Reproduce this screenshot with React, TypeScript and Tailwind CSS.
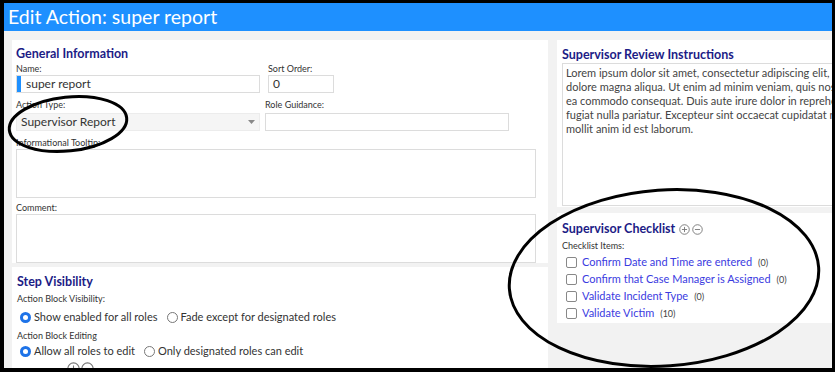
const LOREM = [
  "Lorem ipsum dolor sit amet, consectetur adipiscing elit, sed do eiusmod tempor incididunt ut labore et",
  "dolore magna aliqua. Ut enim ad minim veniam, quis nostrud exercitation ullamco laboris nisi ut aliquip ex",
  "ea commodo consequat. Duis aute irure dolor in reprehenderit in voluptate velit esse cillum dolore eu",
  "fugiat nulla pariatur. Excepteur sint occaecat cupidatat non proident, sunt in culpa qui officia deserunt",
  "mollit anim id est laborum.",
];

const CHECKLIST = [
  { label: "Confirm Date and Time are entered", count: 0 },
  { label: "Confirm that Case Manager is Assigned", count: 0 },
  { label: "Validate Incident Type", count: 0 },
  { label: "Validate Victim", count: 10 },
];

function Label({ children, className = "" }: { children: React.ReactNode; className?: string }) {
  return <div className={`text-[9px] leading-[11px] text-[#333] ${className}`}>{children}</div>;
}

function Heading({ children, className = "" }: { children: React.ReactNode; className?: string }) {
  return <div className={`text-[12.5px] leading-[16px] font-bold text-[#1c1c86] ${className}`}>{children}</div>;
}

function Radio({ checked }: { checked?: boolean }) {
  return checked ? (
    <span className="w-[11px] h-[11px] rounded-full bg-[#1e73e8] flex items-center justify-center shrink-0">
      <span className="w-[5px] h-[5px] rounded-full bg-white" />
    </span>
  ) : (
    <span className="w-[11px] h-[11px] rounded-full border border-[#777] bg-white shrink-0" />
  );
}

function RoundIcon({ minus, size = 11 }: { minus?: boolean; size?: number }) {
  return (
    <svg width={size} height={size} viewBox="0 0 12 12" className="shrink-0">
      <circle cx="6" cy="6" r="5.2" fill="none" stroke="#777" strokeWidth="1" />
      <line x1="3.2" y1="6" x2="8.8" y2="6" stroke="#777" strokeWidth="1" />
      {!minus && <line x1="6" y1="3.2" x2="6" y2="8.8" stroke="#777" strokeWidth="1" />}
    </svg>
  );
}

export default function App() {
  return (
    <div className="relative w-[835px] h-[372px] bg-black pt-[3px] pl-[4px] pr-[3px] pb-[4px] font-['Lato',sans-serif] overflow-hidden">
      <div className="w-full h-full flex flex-col overflow-hidden">
        <div className="h-[28px] bg-[#1e90ff] text-white text-[19.5px] leading-[28px] pl-[4px] shrink-0">
          Edit Action: super report
        </div>

        <div className="flex-1 bg-[#f2f2f2] flex gap-[9px] pl-[8px] pt-[9px] overflow-hidden">
          {/* left column */}
          <div className="w-[536px] shrink-0 flex flex-col gap-[4px]">
            <div className="bg-white h-[227px] pl-[4px] pt-[6px]">
              <Heading>General Information</Heading>
              <div className="flex gap-[8px] mt-[1px]">
                <div className="w-[244px]">
                  <Label>Name:</Label>
                  <div className="mt-[1px] h-[18px] border border-[#dcdcdc] flex items-center">
                    <span className="w-[4px] h-full bg-[#1e90ff]" />
                    <span className="pl-[5px] text-[12px] text-[#333]">super report</span>
                  </div>
                </div>
                <div className="w-[66px]">
                  <Label>Sort Order:</Label>
                  <div className="mt-[1px] h-[18px] border border-[#dcdcdc] pl-[4px] text-[12px] leading-[16px] text-[#333]">0</div>
                </div>
              </div>
              <div className="flex gap-[5px] mt-[6px]">
                <div className="w-[244px]">
                  <Label>Action Type:</Label>
                  <div className="mt-[3px] h-[18px] bg-[#f5f5f5] border border-[#ececec] flex items-center justify-between pl-[4px] pr-[4px]">
                    <span className="text-[12px] text-[#333]">Supervisor Report</span>
                    <svg width="7" height="4" viewBox="0 0 7 4"><path d="M0 0h7L3.5 4z" fill="#888" /></svg>
                  </div>
                </div>
                <div className="w-[244px]">
                  <Label>Role Guidance:</Label>
                  <div className="mt-[3px] h-[18px] border border-[#dcdcdc]" />
                </div>
              </div>
              <Label className="mt-[6px]">Informational Tooltip:</Label>
              <div className="mt-[1px] w-[520px] h-[49px] border border-[#dcdcdc]" />
              <Label className="mt-[4px]">Comment:</Label>
              <div className="mt-[1px] w-[520px] h-[49px] border border-[#dcdcdc]" />
            </div>

            <div className="bg-white flex-1 pl-[5px] pt-[7px]">
              <Heading>Step Visibility</Heading>
              <Label className="mt-[3px]">Action Block Visibility:</Label>
              <div className="flex items-center gap-[3px] pl-[3px] mt-[5px] text-[11px] leading-[16px] text-[#333]">
                <Radio checked />
                <span>Show enabled for all roles</span>
                <span className="w-[3px]" />
                <Radio />
                <span>Fade except for designated roles</span>
              </div>
              <Label className="mt-[5px]">Action Block Editing</Label>
              <div className="flex items-center gap-[3px] pl-[3px] mt-[2px] text-[11px] leading-[16px] text-[#333]">
                <Radio checked />
                <span>Allow all roles to edit</span>
                <span className="w-[3px]" />
                <Radio />
                <span>Only designated roles can edit</span>
              </div>
              <div className="flex gap-[1px] pl-[50px] mt-[3px]">
                <RoundIcon size={13} />
                <RoundIcon minus size={13} />
              </div>
            </div>
          </div>

          {/* right column */}
          <div className="flex-1 flex flex-col gap-[6px] min-w-0">
            <div className="bg-white h-[167px] pl-[5px] pt-[7px] overflow-hidden">
              <Heading>Supervisor Review Instructions</Heading>
              <div className="w-[400px] h-[143px] border border-[#dcdcdc] pl-[3px] pt-[2px] text-[11px] leading-[14px] text-[#444]">
                {LOREM.map((l) => (
                  <div key={l} className="whitespace-nowrap">{l}</div>
                ))}
              </div>
            </div>
            <div className="bg-white h-[110px] pl-[5px] pt-[8px]">
              <div className="flex items-center gap-[2px]">
                <Heading>Supervisor Checklist</Heading>
                <span className="ml-[2px]"><RoundIcon /></span>
                <RoundIcon minus />
              </div>
              <Label className="mt-[3px]">Checklist Items:</Label>
              <div className="mt-[3px] flex flex-col">
                {CHECKLIST.map((c) => (
                  <div key={c.label} className="flex items-center h-[17px] pl-[4px]">
                    <span className="w-[11px] h-[11px] border border-[#888] rounded-[2px] bg-white shrink-0" />
                    <span className="ml-[5px] text-[11px] text-[#3b3bdf] whitespace-nowrap">{c.label}</span>
                    <span className="ml-[6px] text-[9px] text-[#444]">({c.count})</span>
                  </div>
                ))}
              </div>
            </div>
          </div>
        </div>
      </div>

      {/* hand-drawn annotation ovals */}
      <svg className="absolute inset-0 pointer-events-none" width="835" height="372" viewBox="0 0 835 372">
        <ellipse cx="68" cy="124" rx="59" ry="27" transform="rotate(-6 68 124)" fill="none" stroke="#000" strokeWidth="3" />
        <ellipse cx="664" cy="278" rx="155" ry="88" transform="rotate(-4 664 278)" fill="none" stroke="#000" strokeWidth="3" />
      </svg>
    </div>
  );
}
